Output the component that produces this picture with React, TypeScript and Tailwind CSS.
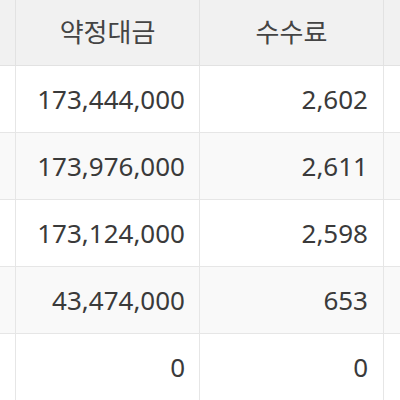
const rows = [
  { amount: "173,444,000", fee: "2,602" },
  { amount: "173,976,000", fee: "2,611" },
  { amount: "173,124,000", fee: "2,598" },
  { amount: "43,474,000", fee: "653" },
  { amount: "0", fee: "0" },
];

export default function App() {
  return (
    <div
      className="h-[400px] w-[400px] overflow-hidden bg-white text-[#3a3a3a]"
      style={{ fontFamily: '"Noto Sans", "Noto Sans CJK KR", sans-serif' }}
    >
      {/* 헤더 */}
      <div className="grid h-[66px] grid-cols-[16px_184px_184px_16px] border-b border-[#e2e2e2] bg-[#f1f1f1]">
        <div className="border-r border-[#e2e2e2]" />
        <div className="flex items-center justify-center border-r border-[#e2e2e2] text-[26px] text-[#444]">약정대금</div>
        <div className="flex items-center justify-center border-r border-[#e2e2e2] text-[26px] text-[#444]">수수료</div>
        <div />
      </div>
      {rows.map((row, i) => (
        <div
          key={i}
          className={
            "grid h-[67px] grid-cols-[16px_184px_184px_16px] border-b border-[#e6e6e6] " +
            (i % 2 === 1 ? "bg-[#f9f9f9]" : "bg-white")
          }
        >
          <div className="border-r border-[#e6e6e6]" />
          <div className="flex items-center justify-end border-r border-[#e6e6e6] pr-[14px] text-[26px]">{row.amount}</div>
          <div className="flex items-center justify-end border-r border-[#e6e6e6] pr-[15px] text-[26px]">{row.fee}</div>
          <div />
        </div>
      ))}
    </div>
  );
}
